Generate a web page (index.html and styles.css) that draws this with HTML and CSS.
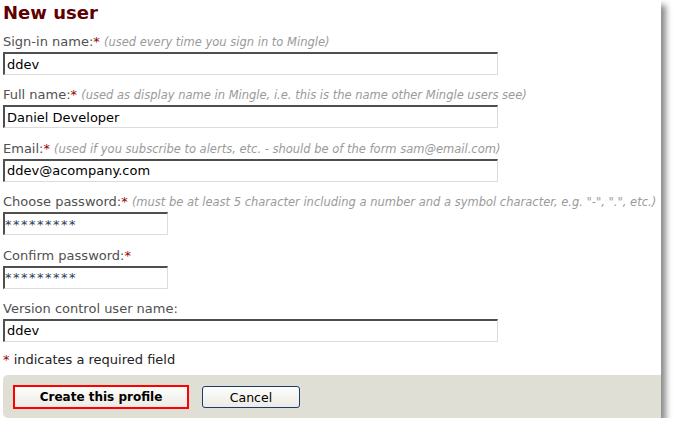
FILE: index.html
```html
<!DOCTYPE html>
<html>
<head>
<meta charset="utf-8">
<link rel="stylesheet" href="styles.css">
</head>
<body>
<div class="panel">
  <h1 class="title">New user</h1>
  <form class="form">
    <div class="field">
      <label class="label">Sign-in name:<span class="req">*</span> <span class="hint">(used every time you sign in to Mingle)</span></label>
      <input class="input wide" type="text" value="ddev">
    </div>
    <div class="field">
      <label class="label">Full name:<span class="req">*</span> <span class="hint">(used as display name in Mingle, i.e. this is the name other Mingle users see)</span></label>
      <input class="input wide" type="text" value="Daniel Developer">
    </div>
    <div class="field">
      <label class="label">Email:<span class="req">*</span> <span class="hint">(used if you subscribe to alerts, etc. - should be of the form sam@email.com)</span></label>
      <input class="input wide" type="text" value="ddev@acompany.com">
    </div>
    <div class="field">
      <label class="label">Choose password:<span class="req">*</span> <span class="hint">(must be at least 5 character including a number and a symbol character, e.g. "-", ".", etc.)</span></label>
      <input class="input short pw" type="text" value="*********">
    </div>
    <div class="field">
      <label class="label">Confirm password:<span class="req">*</span></label>
      <input class="input short pw" type="text" value="*********">
    </div>
    <div class="field last">
      <label class="label">Version control user name:</label>
      <input class="input wide" type="text" value="ddev">
    </div>
    <p class="note"><span class="req">*</span> indicates a required field</p>
    <div class="footer">
      <button type="button" class="btn primary">Create this profile</button>
      <button type="button" class="btn cancel">Cancel</button>
    </div>
  </form>
</div>
</body>
</html>
```

FILE: styles.css
```css
html, body {
  margin: 0;
  padding: 0;
  background: #ffffff;
}
body {
  font-family: "DejaVu Sans", Verdana, sans-serif;
  font-size: 13px;
  color: #505050;
}
.panel {
  width: 658px;
  height: 418px;
  padding-left: 3px;
  background: #ffffff;
  box-shadow: 5px 5px 6px rgba(0, 0, 0, 0.45);
  display: flex;
  flex-direction: column;
}
.title {
  margin: 0 0 7px 0;
  font-size: 18px;
  line-height: 25px;
  font-weight: bold;
  color: #600000;
  padding-bottom: 1px;
}
.form {
  display: flex;
  flex-direction: column;
  flex: 1;
}
.field {
  display: flex;
  flex-direction: column;
  margin-bottom: 11.4px;
}
.field.last {
  margin-bottom: 0;
}
.label {
  line-height: 18px;
  height: 18px;
  margin-bottom: 1px;
  white-space: nowrap;
}
.req {
  color: #990000;
}
.hint {
  font-style: italic;
  font-size: 11.5px;
  color: #9a9a9a;
}
.input {
  box-sizing: border-box;
  height: 23px;
  margin: 0;
  padding: 0 2px;
  font-family: "DejaVu Sans", Verdana, sans-serif;
  font-size: 13px;
  color: #000000;
  background: #ffffff;
  border-style: solid;
  border-width: 2px 1px 1px 2px;
  border-color: #4f4f4f #dcdcdc #dcdcdc #4f4f4f;
  outline: none;
}
.input.wide {
  width: 495px;
}
.input.short {
  width: 165px;
}
.input.pw {
  padding-left: 0;
  letter-spacing: 1.5px;
  color: #2a3d5a;
}
.note {
  margin: 9px 0 0 0;
  line-height: 18px;
  color: #222222;
}
.footer {
  margin-top: auto;
  height: 43px;
  box-sizing: border-box;
  padding: 10px 0 0 10px;
  background: #dfdfd6;
  border-radius: 5px 0 0 5px;
  display: flex;
  align-items: flex-start;
  gap: 13px;
}
.btn {
  font-family: "DejaVu Sans", Verdana, sans-serif;
  font-size: 12.5px;
  color: #000000;
  background: linear-gradient(#fdfdfb, #ecebe5);
  cursor: pointer;
}
.btn.primary {
  width: 176px;
  height: 24px;
  font-size: 12px;
  font-weight: bold;
  border: 2px solid #ff0000;
  border-radius: 0;
  padding: 0;
}
.btn.cancel {
  width: 98px;
  height: 22px;
  margin-top: 1px;
  border: 1px solid #1c3c6c;
  border-radius: 3px;
  padding: 0;
}
```
